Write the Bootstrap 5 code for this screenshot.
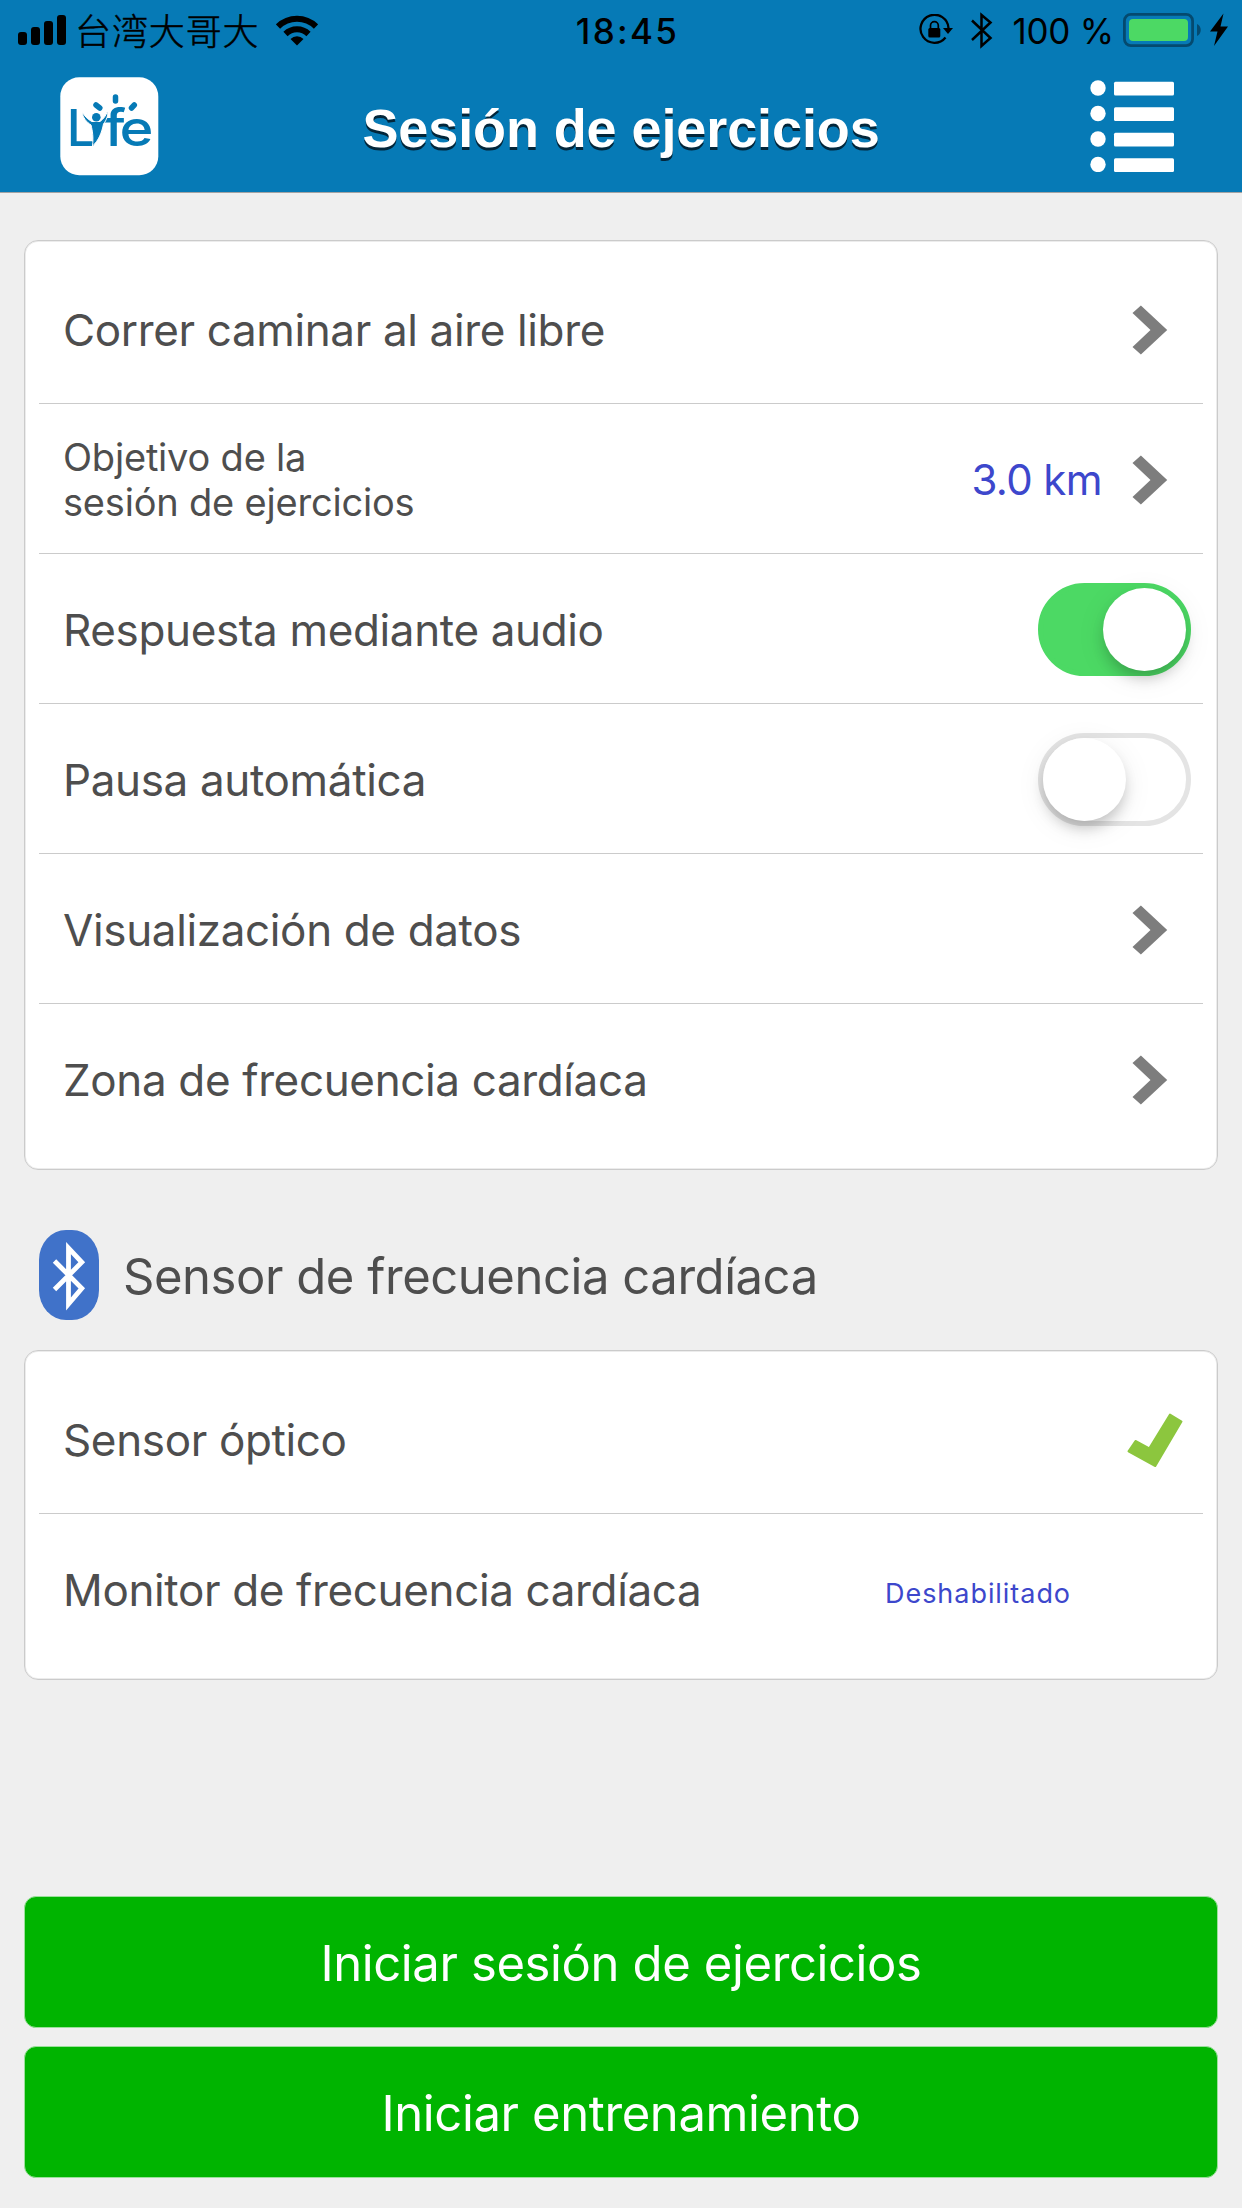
<!DOCTYPE html>
<html lang="es">
<head>
<meta charset="utf-8">
<meta name="viewport" content="width=device-width, initial-scale=1">
<title>Sesión de ejercicios</title>
<link href="https://cdn.jsdelivr.net/npm/bootstrap@5.3.0/dist/css/bootstrap.min.css" rel="stylesheet">
<style>
  body { background: #efefef; color: #4e4e4e; font-family: Inter, "Noto Sans CJK SC", sans-serif; }
  svg { display: block; flex: none; }
  .app { width: 1242px; height: 2208px; }
  .app-header { height: 193px; background: #067ab6; border-bottom: 1px solid #a3a3a3; }
  .status-bar { height: 60px; color: #000; font-size: 35px; line-height: 60px; padding: 0 14px 0 18px; }
  .status-side { flex: 1 1 0; }
  .carrier { font-family: "Noto Sans CJK SC", sans-serif; font-weight: 300; font-size: 36px; letter-spacing: .9px; margin-left: 9px; padding-bottom: 3px; -webkit-text-stroke: .5px #000; }
  .clock { font-weight: 500; letter-spacing: 2.3px; padding-left: 9px; padding-top: 1px; }
  .percent { margin: 0 9px 0 19px; padding-top: 1px; letter-spacing: -.2px; }
  .bt-status { margin-left: 18px; }
  .bolt { margin-left: 8px; }
  .title-bar { height: 132px; padding: 0 68px 0 60px; }
  .title-bar h1 { font: 700 54px/64px "Liberation Sans", Arial, sans-serif; letter-spacing: -.1px; color: #fff; text-shadow: 0 3px 0 #03263a; padding: 4px 7px 0 0; }
  .page { padding: 47px 24px 30px; }
  .panel { border: 1px solid #cbcbcb; border-radius: 14px; padding: 13px 14px 15px; box-shadow: inset 0 0 0 1px #ececec; }
  .panel .list-group-item { height: 150px; padding: 3px 12px 0 24px; border: 0; border-bottom: 1px solid #cbcbcb; color: inherit; background: none; font-size: 44px; line-height: 54px; letter-spacing: -.36px; }
  .panel .list-group-item:last-child { border-bottom-color: transparent; padding-top: 1px; }
  .two-line { font-size: 38px; line-height: 45px; letter-spacing: -.2px; }
  .value { color: #3d47cc; }
  .goal { font-size: 42px; letter-spacing: -.6px; margin-right: 30px; }
  .state { font-size: 27px; letter-spacing: .95px; margin: 8px 120px 0 0; }
  .chev { margin-right: 23px; }
  .check { margin-right: 8px; }
  .toggle { width: 153px; height: 93px; border-radius: 47px; border: 5px solid #e4e4e4; margin-bottom: 2px; }
  .toggle.on { background: #4cd964; border-color: #4cd964; justify-content: flex-end; }
  .knob { width: 83px; height: 83px; border-radius: 50%; background: #fff; box-shadow: 0 9px 14px -2px rgba(0,0,0,.2), 0 6px 30px rgba(0,0,0,.08); }
  .section-head { height: 180px; padding: 30px 15px 0; }
  .section-head h2 { font-size: 49px; line-height: 60px; font-weight: 400; letter-spacing: -.45px; margin-left: 24px; padding-top: 4px; }
  .actions { gap: 18px; }
  .go { height: 132px; border: 1px solid #9be09b; border-radius: 12px; background: #00b400; color: #fff; font-size: 49px; line-height: 60px; letter-spacing: -.38px; padding: 3px 0 0; }
</style>
<script src="https://cdn.jsdelivr.net/npm/bootstrap@5.3.0/dist/js/bootstrap.bundle.min.js"></script>
</head>
<body>
<svg width="0" height="0" class="position-absolute">
  <symbol id="chevron" viewBox="0 0 36 50"><path fill="#7d7d7d" d="M8.9.5 35.2 25 8.9 49.5.5 42 18.5 25 .5 8z"/></symbol>
</svg>
<div class="app d-flex flex-column">
  <header class="app-header">
    <div class="status-bar d-flex align-items-center">
      <div class="status-side d-flex align-items-center">
        <svg width="48" height="30" viewBox="0 0 48 30"><rect y="17" width="9" height="13" rx="3"/><rect x="13" y="12" width="9" height="18" rx="3"/><rect x="26" y="6" width="9" height="24" rx="3"/><rect x="39" width="9" height="30" rx="3"/></svg>
        <span class="carrier">台湾大哥大</span>
        <svg class="ms-3" width="42" height="31" viewBox="0 0 42 31"><g fill="none" stroke="#000" stroke-width="6"><path d="M2 11.5a27 27 0 0 1 38 0"/><path d="M9.5 19a16.5 16.5 0 0 1 23 0"/></g><path d="M21 30.500l-6.500-6.500a9.300 9.300 0 0 1 13 0z"/></svg>
      </div>
      <span class="clock">18:45</span>
      <div class="status-side d-flex align-items-center justify-content-end">
        <svg width="34" height="32" viewBox="0 0 34 32"><path d="M26.500 23.500A14 14 0 1 1 29.500 14" fill="none" stroke="#000" stroke-width="2.300"/><path d="M24 14h10l-5 6z"/><rect x="9.300" y="14" width="12" height="9.500" rx="1.500"/><path d="M11.500 15v-3.500a3.900 3.900 0 0 1 7.800 0V15" fill="none" stroke="#000" stroke-width="1.700"/></svg>
        <svg class="bt-status" width="22" height="37" viewBox="0 0 22 37"><path d="M1 8.500 19.500 26 10.500 34V3l9 7.500L1 28" fill="none" stroke="#000" stroke-width="2.500"/></svg>
        <span class="percent">100 %</span>
        <svg width="79" height="34" viewBox="0 0 79 34"><rect x="1.400" y="1.400" width="68.200" height="31.200" rx="6.500" fill="none" stroke="#044a6f" stroke-width="2.800"/><rect x="6" y="6" width="59" height="22" rx="4" fill="#4cd964"/><path fill="#044a6f" d="M74 11c5 2 5 10 0 12z"/></svg>
        <svg class="bolt" width="18" height="34" viewBox="0 0 18 34"><path d="M13.500.500 0 18.500h7.500L4 33 18 13.500h-7.500z"/></svg>
      </div>
    </div>
    <div class="title-bar d-flex align-items-center justify-content-between">
      <svg width="99" height="99" viewBox="60 77 99 99" role="img" aria-label="Lyfe">
        <rect x="60.300" y="77.300" width="98" height="98" rx="19" fill="#fff"/>
        <g fill="#067ab6" font-family="Inter, sans-serif" font-weight="500">
          <text x="66.800" y="145.500" font-size="51" textLength="29" lengthAdjust="spacingAndGlyphs">L</text>
          <text x="104" y="145.500" font-size="51" textLength="22" lengthAdjust="spacingAndGlyphs">f</text>
          <text x="119.500" y="145.500" font-size="50" textLength="34" lengthAdjust="spacingAndGlyphs">e</text>
          <path stroke="#fff" stroke-width="1" d="M82 112c4 6 7 8 10 9.500h8c4-3 6-6 7.500-10.500 1 4-1 9-4 13-1.500 8-5 17-11 22 1-9 0-15-1.500-21-4.500-3-8-7-9-13z"/>
          <circle cx="96.300" cy="117.300" r="4.300"/>
        </g>
        <g stroke="#067ab6" stroke-width="5.500" stroke-linecap="round"><path d="M115.500 97v4M96 105l3.800 3M134.300 105l-2.800 3"/></g>
      </svg>
      <h1 class="m-0">Sesión de ejercicios</h1>
      <svg width="84" height="92" viewBox="0 0 84 92" fill="#fff"><circle cx="8" cy="8" r="7.700"/><circle cx="8" cy="33.500" r="7.700"/><circle cx="8" cy="59" r="7.700"/><circle cx="8" cy="84.500" r="7.700"/><rect x="24" y="1.800" width="60" height="13.700" rx="1.500"/><rect x="24" y="27.200" width="60" height="13.700" rx="1.500"/><rect x="24" y="52.700" width="60" height="13.700" rx="1.500"/><rect x="24" y="78.200" width="60" height="13.700" rx="1.500"/></svg>
    </div>
  </header>

  <main class="page d-flex flex-column flex-grow-1">
    <section class="panel bg-white">
      <ul class="list-group list-group-flush">
        <li class="list-group-item d-flex align-items-center justify-content-between"><span>Correr caminar al aire libre</span><svg class="chev" width="36" height="50"><use href="#chevron"/></svg></li>
        <li class="list-group-item d-flex align-items-center"><span class="two-line me-auto">Objetivo de la<br>sesión de ejercicios</span><span class="value goal">3.0 km</span><svg class="chev" width="36" height="50"><use href="#chevron"/></svg></li>
        <li class="list-group-item d-flex align-items-center justify-content-between"><span>Respuesta mediante audio</span><span class="toggle on d-flex"><span class="knob"></span></span></li>
        <li class="list-group-item d-flex align-items-center justify-content-between"><span>Pausa automática</span><span class="toggle d-flex"><span class="knob"></span></span></li>
        <li class="list-group-item d-flex align-items-center justify-content-between"><span>Visualización de datos</span><svg class="chev" width="36" height="50"><use href="#chevron"/></svg></li>
        <li class="list-group-item d-flex align-items-center justify-content-between"><span>Zona de frecuencia cardíaca</span><svg class="chev" width="36" height="50"><use href="#chevron"/></svg></li>
      </ul>
    </section>

    <div class="section-head d-flex align-items-center">
      <svg width="60" height="90" viewBox="0 0 60 90"><rect width="60" height="90" rx="27" ry="30" fill="#4072c9"/><path d="M15.500 31 42.800 58.300 29.500 74V18L42.800 32.300 15.500 59.500" fill="none" stroke="#fff" stroke-width="4.800"/></svg>
      <h2 class="mb-0">Sensor de frecuencia cardíaca</h2>
    </div>

    <section class="panel bg-white">
      <ul class="list-group list-group-flush">
        <li class="list-group-item d-flex align-items-center justify-content-between"><span>Sensor óptico</span><svg class="check" width="56" height="55" viewBox="0 0 56 55"><path d="M8.500 28 22.300 35.300 43 1.500 54.500 8.500 28.300 53 1.500 38.300z" fill="#8cc63e" stroke="#8cc63e" stroke-width="2" stroke-linejoin="round"/></svg></li>
        <li class="list-group-item d-flex align-items-center justify-content-between"><span>Monitor de frecuencia cardíaca</span><span class="value state">Deshabilitado</span></li>
      </ul>
    </section>

    <div class="actions d-grid mt-auto">
      <button type="button" class="btn go">Iniciar sesión de ejercicios</button>
      <button type="button" class="btn go">Iniciar entrenamiento</button>
    </div>
  </main>
</div>
</body>
</html>
